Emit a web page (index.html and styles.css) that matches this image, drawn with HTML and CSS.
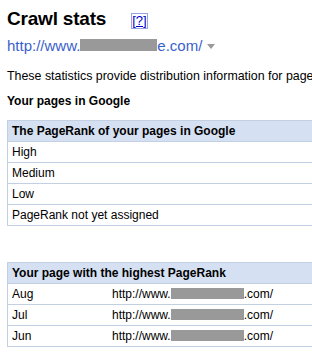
FILE: index.html
```html
<!DOCTYPE html>
<html lang="en">
<head>
  <meta charset="UTF-8">
  <title>Crawl stats</title>
  <link rel="stylesheet" href="styles.css">
</head>
<body>
  <div class="title-row">
    <h1>Crawl stats</h1>
    <a href="#" class="help">[?]</a>
  </div>
  <div class="site">
    <a href="#">http://www.<span class="blur b1"></span>e.com/</a>
    <span class="caret"></span>
  </div>

  <p class="intro">These statistics provide distribution information for pages in the Google index.</p>
  <h3>Your pages in Google</h3>

  <table class="stats">
    <tr><th colspan="2">The PageRank of your pages in Google</th></tr>
    <tr><td colspan="2">High</td></tr>
    <tr><td colspan="2">Medium</td></tr>
    <tr><td colspan="2">Low</td></tr>
    <tr><td colspan="2">PageRank not yet assigned</td></tr>
  </table>

  <table class="stats top">
    <tr><th colspan="2">Your page with the highest PageRank</th></tr>
    <tr><td class="month">Aug</td><td class="url">http://www.<span class="blur b2"></span>.com/</td></tr>
    <tr><td class="month">Jul</td><td class="url">http://www.<span class="blur b2"></span>.com/</td></tr>
    <tr><td class="month">Jun</td><td class="url">http://www.<span class="blur b2"></span>.com/</td></tr>
  </table>
</body>
</html>
```

FILE: styles.css
```css
html, body {
  overflow: hidden;
}
body {
  font-family: 'Liberation Sans', Arial, sans-serif;
  margin: 0;
  padding: 0 0 0 7px;
  background: #fff;
  color: #000;
  width: 500px;
}
.title-row {
  display: flex;
  align-items: baseline;
  height: 35px;
  padding-top: 7px;
  box-sizing: border-box;
}
h1 {
  font-size: 19px;
  font-weight: bold;
  margin: 0;
  line-height: 24px;
  letter-spacing: -0.2px;
}
.help {
  margin-left: 26px;
  font-size: 13px;
  line-height: 14px;
  color: #0000cc;
  outline: 1px solid #9aa3e6;
}
.site {
  display: flex;
  align-items: center;
  height: 20px;
}
.site a {
  font-size: 15px;
  color: #3a5fcd;
  text-decoration: none;
  display: flex;
  align-items: center;
}
.blur {
  display: inline-block;
  background: #999;
}
.b1 {
  width: 77px;
  height: 12px;
}
.b2 {
  width: 73px;
  height: 11px;
}
.caret {
  margin-left: 5px;
  margin-top: 2px;
  width: 0;
  height: 0;
  border-left: 4px solid transparent;
  border-right: 4px solid transparent;
  border-top: 5px solid #999;
}
.intro {
  font-size: 12.4px;
  margin: 14px 0 0;
  white-space: nowrap;
  line-height: 15px;
}
h3 {
  font-size: 12px;
  font-weight: bold;
  margin: 10px 0 0;
  line-height: 15px;
}
.stats {
  border-collapse: collapse;
  width: 420px;
  font-size: 12px;
  margin-top: 11px;
}
.stats th, .stats td {
  border: 1px solid #c3cfe3;
  text-align: left;
  padding: 0 4px;
  height: 20px;
}
.stats th {
  background: #d6e0f3;
}
.stats.top {
  margin-top: 36px;
}
.stats td {
  white-space: nowrap;
}
.month {
  width: 92px;
  border-right: none !important;
}
.url {
  border-left: none !important;
}
.stats td .blur {
  vertical-align: -1px;
}
```
